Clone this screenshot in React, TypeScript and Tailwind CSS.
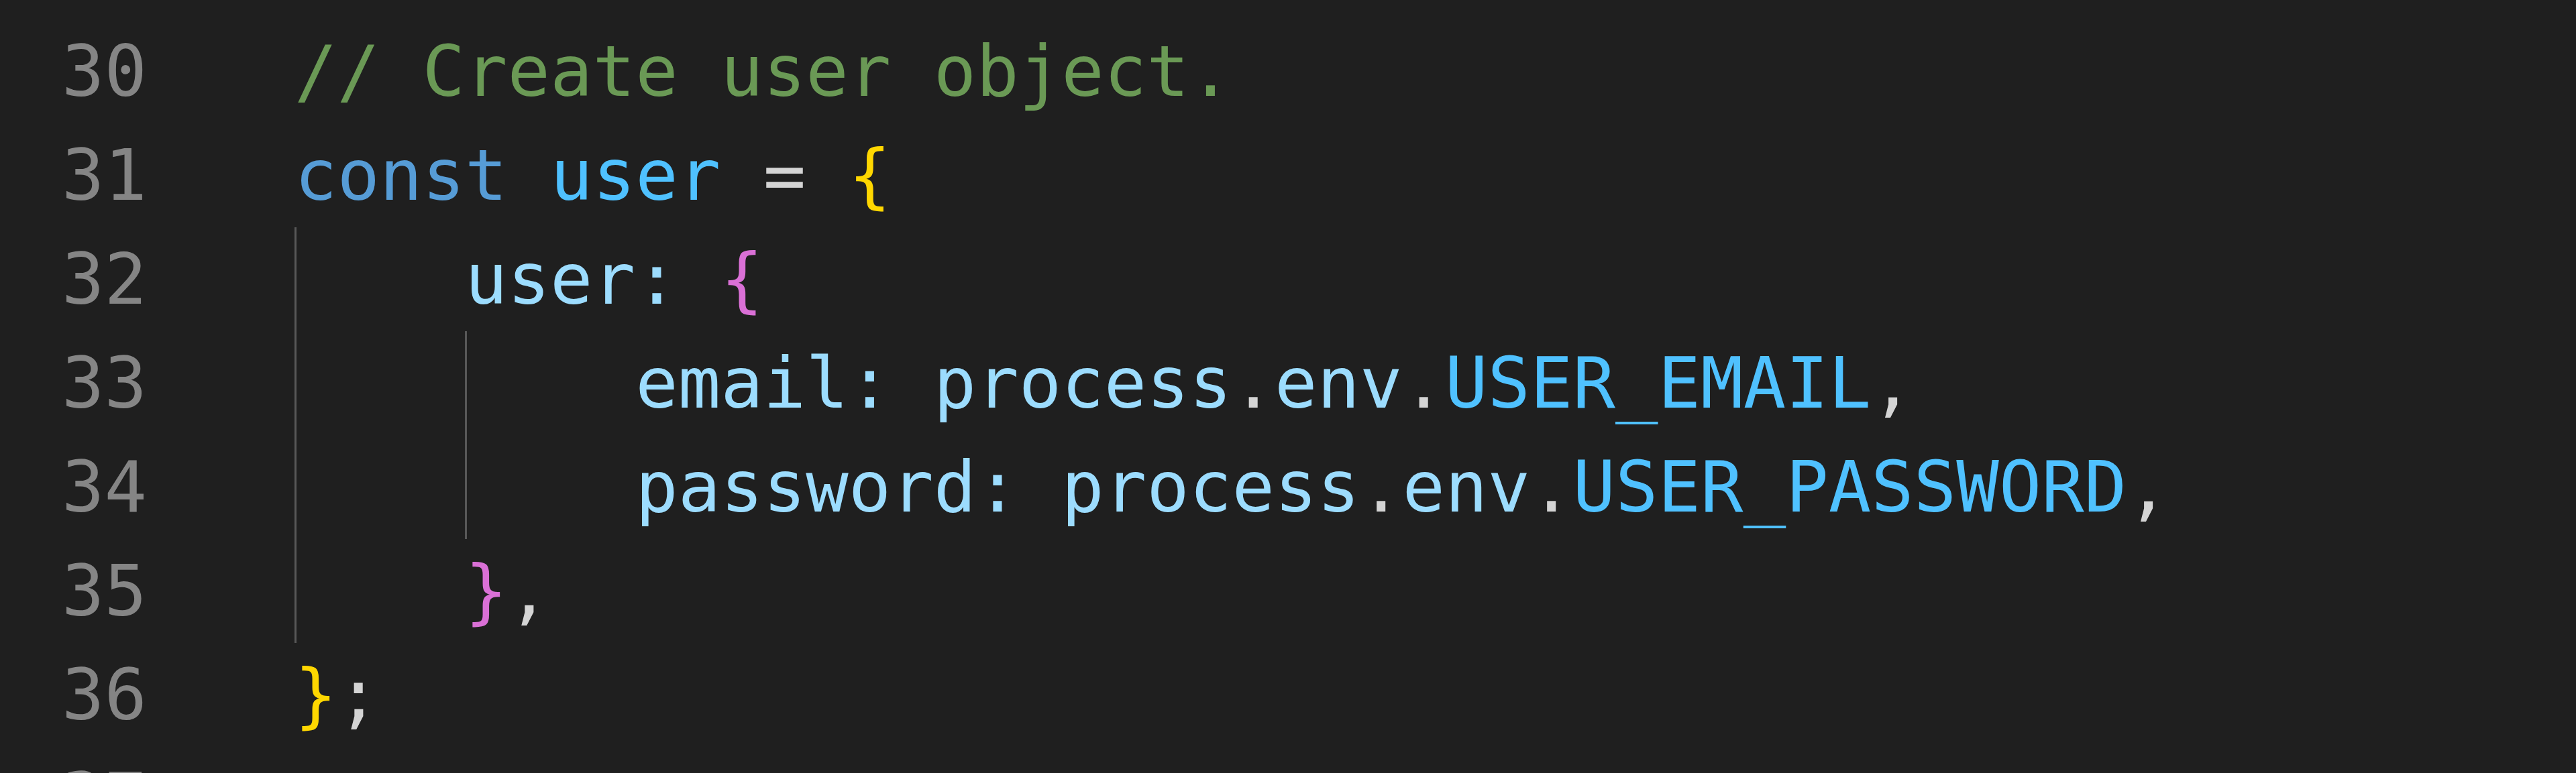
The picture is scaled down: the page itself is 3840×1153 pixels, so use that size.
import React from "react";

const Line = ({ children }: { children?: React.ReactNode }) => (
  <div className="h-[155px] whitespace-pre">{children}</div>
);

export default function App() {
  const nums = [30, 31, 32, 33, 34, 35, 36, 37];
  return (
    <div className="w-[3840px] h-[1153px] overflow-hidden bg-[#1f1f1f] font-['DejaVu_Sans_Mono',monospace] text-[105.5px] leading-[155px] pt-[29px] flex">
      <div className="w-[219px] shrink-0 flex flex-col text-right text-[#858585]">
        {nums.map((n) => (
          <div key={n} className="h-[155px]">
            {n}
          </div>
        ))}
      </div>
      <div className="ml-[220px] flex flex-col text-[#d4d4d4]">
        <Line>
          <span className="text-[#6a9955]">// Create user object.</span>
        </Line>
        <Line>
          <span className="text-[#569cd6]">const</span>{" "}
          <span className="text-[#4fc1ff]">user</span> ={" "}
          <span className="text-[#ffd700]">{"{"}</span>
        </Line>
        <div className="border-l-[3px] border-[#585858] pl-[calc(4ch-3px)] flex flex-col">
          <Line>
            <span className="text-[#9cdcfe]">user:</span>{" "}
            <span className="text-[#da70d6]">{"{"}</span>
          </Line>
          <div className="border-l-[3px] border-[#585858] pl-[calc(4ch-3px)] flex flex-col">
            <Line>
              <span className="text-[#9cdcfe]">email:</span>{" "}
              <span className="text-[#9cdcfe]">process</span>.
              <span className="text-[#9cdcfe]">env</span>.
              <span className="text-[#4fc1ff]">USER_EMAIL</span>,
            </Line>
            <Line>
              <span className="text-[#9cdcfe]">password:</span>{" "}
              <span className="text-[#9cdcfe]">process</span>.
              <span className="text-[#9cdcfe]">env</span>.
              <span className="text-[#4fc1ff]">USER_PASSWORD</span>,
            </Line>
          </div>
          <Line>
            <span className="text-[#da70d6]">{"}"}</span>,
          </Line>
        </div>
        <Line>
          <span className="text-[#ffd700]">{"}"}</span>;
        </Line>
        <Line />
      </div>
    </div>
  );
}
